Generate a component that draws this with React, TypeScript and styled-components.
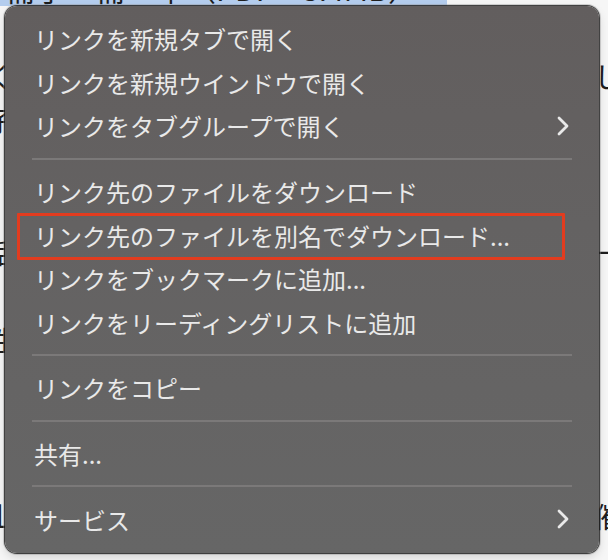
import React from "react";
import styled, { createGlobalStyle, css } from "styled-components";

const GlobalStyle = createGlobalStyle`
  html, body {
    margin: 0;
    padding: 0;
    background: #f6f6f6;
  }
  body {
    font-family: "Noto Sans CJK JP", "Noto Sans", sans-serif;
  }
`;

const Page = styled.div`
  position: relative;
  width: 608px;
  height: 560px;
  overflow: hidden;
  background: #f6f6f6;
`;

/* the web page under the context menu, mostly hidden */
const Doc = styled.div`
  display: flex;
  flex-direction: column;
  gap: 8px;
  margin-top: -30px;
  color: #1e1e1e;
  font-size: 28px;
  line-height: 36px;
  white-space: nowrap;
`;

const DocTitle = styled.div`
  width: 441px;
  padding-left: 6px;
  background: #b4cdee;
  font-size: 30px;
`;

const DocLine = styled.div`
  display: flex;
  justify-content: space-between;
  margin: 0 -14px;
  min-height: 36px;
`;

const Menu = styled.div`
  position: absolute;
  left: 5px;
  top: 6px;
  width: 594px;
  height: 547px;
  box-sizing: border-box;
  padding: 11px 0 8px;
  border-radius: 12px;
  background: linear-gradient(180deg, #625e5e 0%, #646262 40%, #666666 100%);
  box-shadow: 0 0 0 1px rgba(20, 20, 20, 0.75), 0 0 0 2px rgba(150, 150, 150, 0.4),
    0 4px 10px rgba(0, 0, 0, 0.15);
  display: flex;
  flex-direction: column;
`;

const Item = styled.div<{ boxed?: boolean }>`
  position: relative;
  height: 43.6px;
  display: flex;
  align-items: center;
  justify-content: space-between;
  padding: 0 30px 0 29px;
  color: #e9e9e9;
  font-size: 24px;
  white-space: nowrap;

  ${({ boxed }) =>
    boxed &&
    css`
      &::after {
        content: "";
        position: absolute;
        left: 12px;
        right: 34px;
        top: 0;
        bottom: -3px;
        border: 3px solid #e23c1f;
        border-radius: 1px;
      }
    `}
`;

const Separator = styled.div`
  height: 22px;
  display: flex;
  align-items: center;
  padding: 0 27px;

  &::before {
    content: "";
    flex: 1;
    height: 2px;
    background: #7b7979;
  }
`;

const Chevron = () => (
  <svg width="12" height="20" viewBox="0 0 12 20">
    <polyline
      points="2,2 10,10 2,18"
      fill="none"
      stroke="#e9e9e9"
      strokeWidth="2.8"
      strokeLinecap="round"
      strokeLinejoin="round"
    />
  </svg>
);

type Entry = { label: string; submenu?: boolean; boxed?: boolean } | "sep";

const entries: Entry[] = [
  { label: "リンクを新規タブで開く" },
  { label: "リンクを新規ウインドウで開く" },
  { label: "リンクをタブグループで開く", submenu: true },
  "sep",
  { label: "リンク先のファイルをダウンロード" },
  { label: "リンク先のファイルを別名でダウンロード...", boxed: true },
  { label: "リンクをブックマークに追加..." },
  { label: "リンクをリーディングリストに追加" },
  "sep",
  { label: "リンクをコピー" },
  "sep",
  { label: "共有..." },
  "sep",
  { label: "サービス", submenu: true },
];

const docLines = [
  ["", ""],
  ["く", "し"],
  ["子", ""],
  ["", ""],
  ["", ""],
  ["話", "一"],
  ["", ""],
  ["性", ""],
  ["", ""],
  ["", ""],
  ["", ""],
  ["山", "催"],
];

export default function App() {
  return (
    <Page>
      <GlobalStyle />
      <Doc>
        <DocTitle>冊子　冊　華（PDF：3.4MB）</DocTitle>
        {docLines.map(([l, r], i) => (
          <DocLine key={i}>
            <span>{l}</span>
            <span>{r}</span>
          </DocLine>
        ))}
      </Doc>
      <Menu>
        {entries.map((e, i) =>
          e === "sep" ? (
            <Separator key={i} />
          ) : (
            <Item key={i} boxed={e.boxed}>
              <span>{e.label}</span>
              {e.submenu && <Chevron />}
            </Item>
          )
        )}
      </Menu>
    </Page>
  );
}
